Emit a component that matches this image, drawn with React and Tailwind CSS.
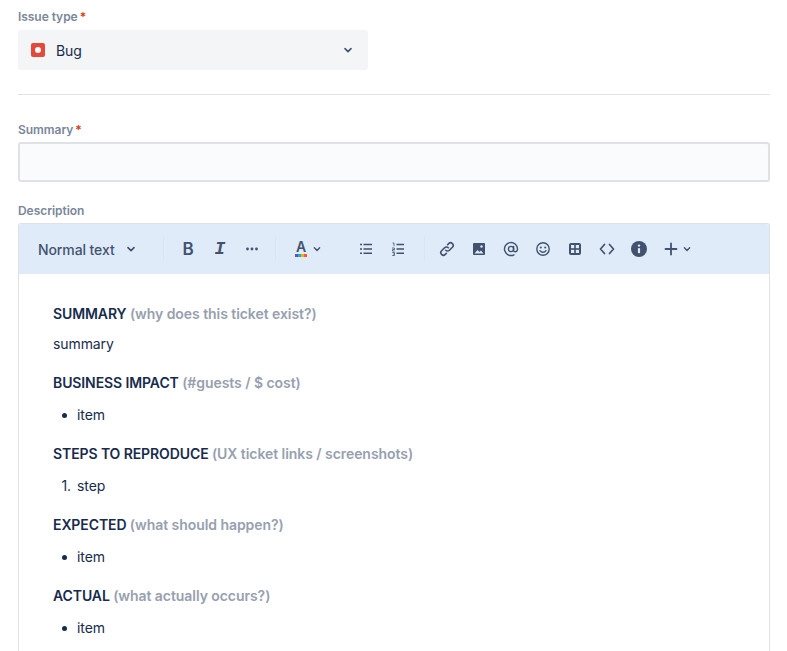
const ink = "#172b4d";
const barBg = "#dfebf9";

function Chevron({ className = "" }) {
  return (
    <svg viewBox="0 0 24 24" className={className} fill="none">
      <path d="M7.5 10l4.5 4.5 4.5-4.5" stroke="currentColor" strokeWidth="2.4" strokeLinecap="round" strokeLinejoin="round" />
    </svg>
  );
}

function Label({ children, required }) {
  return (
    <div className="flex h-[20px] items-center text-[12px] font-semibold leading-[16px] tracking-[-0.05px] text-[#7a869a]">
      {children}
      {required && <span className="ml-[2px] text-[#de350b]">*</span>}
    </div>
  );
}

function Sep() {
  return <div className="h-[24px] w-px bg-[#d8e5f5]" />;
}

function Tool({ children }) {
  return <div className="flex h-[32px] w-[32px] shrink-0 items-center justify-center text-[#42526e]">{children}</div>;
}

function Icon({ children }) {
  return (
    <svg viewBox="0 0 16 16" className="h-[16px] w-[16px]" fill="none">
      {children}
    </svg>
  );
}

function Toolbar() {
  return (
    <div className="flex h-[50px] items-center rounded-t-[3px] bg-[#dfebf9] pl-[19px] text-[#42526e]">
      <div className="flex w-[105px] items-center text-[14px] font-medium tracking-[-0.1px]">
        Normal text
        <Chevron className="ml-[8px] h-[16px] w-[16px]" />
      </div>
      <div className="ml-[20px]"><Sep /></div>
      <div className="ml-[8px] flex">
        <Tool><span className="text-[17px] font-semibold leading-none">B</span></Tool>
        <Tool><span className="font-['Liberation_Mono',monospace] text-[18px] font-bold italic leading-none">I</span></Tool>
        <Tool>
          <Icon>
            <circle cx="3.5" cy="8" r="1.4" fill="currentColor" />
            <circle cx="8" cy="8" r="1.4" fill="currentColor" />
            <circle cx="12.5" cy="8" r="1.4" fill="currentColor" />
          </Icon>
        </Tool>
      </div>
      <div className="ml-[7px]"><Sep /></div>
      <div className="ml-[18px] flex items-center">
        <div className="relative flex h-[18px] w-[14px] flex-col items-center">
          <span className="text-[14px] font-semibold leading-[14px]">A</span>
          <svg viewBox="0 0 12 3" className="h-[3px] w-[12px]">
            <rect x="0" width="3" height="3" fill="#6554c0" />
            <rect x="3" width="3" height="3" fill="#00b8d9" />
            <rect x="6" width="3" height="3" fill="#ffab00" />
            <rect x="9" width="3" height="3" fill="#ff5630" />
          </svg>
        </div>
        <Chevron className="ml-[2px] h-[14px] w-[14px]" />
      </div>
      <div className="ml-[27px] flex">
        <Tool>
          <Icon>
            <path d="M4.5 3.5H13M4.5 7.9H13M4.5 12.3H13" stroke="currentColor" strokeWidth="1.5" />
            <path d="M1 3.5h2M1 7.9h2M1 12.3h2" stroke="currentColor" strokeWidth="1.5" />
          </Icon>
        </Tool>
        <Tool>
          <Icon>
            <path d="M5.5 3.5H13M5.5 7.9H13M5.5 12.3H13" stroke="currentColor" strokeWidth="1.5" />
            <path d="M1.5 2h1.5v3M1 7h2.5v1.5H1.5V10h2.2M1.2 11.5h2.3v3H1.2M2 13h1.5" stroke="currentColor" strokeWidth="0.8" />
          </Icon>
        </Tool>
      </div>
      <div className="ml-[9px]"><Sep /></div>
      <div className="ml-[6px] flex">
        <Tool>
          <Icon>
            <path d="M6.7 9.3a2.6 2.6 0 0 0 3.7 0l3-3a2.6 2.6 0 0 0-3.7-3.7L8.6 3.7" stroke="currentColor" strokeWidth="1.6" strokeLinecap="round" />
            <path d="M9.3 6.7a2.6 2.6 0 0 0-3.7 0l-3 3a2.6 2.6 0 0 0 3.7 3.7l1.1-1.1" stroke="currentColor" strokeWidth="1.6" strokeLinecap="round" />
          </Icon>
        </Tool>
        <Tool>
          <Icon>
            <rect x="2" y="2" width="12" height="12" rx="1" fill="currentColor" />
            <path d="M3.5 12.5l3-3.5 2 2 1.5-1.5 2.5 3z" fill={barBg} />
            <circle cx="10.5" cy="5.5" r="1.2" fill={barBg} />
          </Icon>
        </Tool>
        <Tool>
          <Icon>
            <circle cx="8" cy="8" r="2.6" stroke="currentColor" strokeWidth="1.4" />
            <path d="M10.6 5.4v3.8c0 2.4 3.9 2.2 3.9-1.2A6.5 6.5 0 1 0 11 13.8" stroke="currentColor" strokeWidth="1.4" strokeLinecap="round" />
          </Icon>
        </Tool>
        <Tool>
          <Icon>
            <circle cx="8" cy="8" r="6.2" stroke="currentColor" strokeWidth="1.4" />
            <circle cx="5.8" cy="6.5" r="1" fill="currentColor" />
            <circle cx="10.2" cy="6.5" r="1" fill="currentColor" />
            <path d="M5 9.6c1.5 2.2 4.5 2.2 6 0" stroke="currentColor" strokeWidth="1.3" strokeLinecap="round" />
          </Icon>
        </Tool>
        <Tool>
          <Icon>
            <rect x="2" y="2" width="12" height="12" rx="2" fill="currentColor" />
            <rect x="4" y="4" width="3.2" height="3.2" fill={barBg} />
            <rect x="8.8" y="4" width="3.2" height="3.2" fill={barBg} />
            <rect x="4" y="8.8" width="3.2" height="3.2" fill={barBg} />
            <rect x="8.8" y="8.8" width="3.2" height="3.2" fill={barBg} />
          </Icon>
        </Tool>
        <Tool>
          <Icon>
            <path d="M5.5 3.5L1.5 8l4 4.5M10.5 3.5l4 4.5-4 4.5" stroke="currentColor" strokeWidth="1.7" strokeLinecap="round" strokeLinejoin="round" />
          </Icon>
        </Tool>
        <Tool>
          <Icon>
            <circle cx="8" cy="8" r="8" fill="currentColor" />
            <circle cx="8" cy="4.6" r="1.2" fill={barBg} />
            <rect x="6.9" y="7" width="2.2" height="5.2" rx="1" fill={barBg} />
          </Icon>
        </Tool>
        <Tool>
          <Icon>
            <path d="M8 2.5v11M2.5 8h11" stroke="currentColor" strokeWidth="1.8" strokeLinecap="round" />
          </Icon>
        </Tool>
      </div>
      <Chevron className="-ml-[7px] h-[14px] w-[14px]" />
    </div>
  );
}

function Heading({ title, hint, className = "" }) {
  return (
    <p className={`h-[20px] text-[14px] font-semibold leading-[20px] tracking-[-0.1px] ${className}`} style={{ color: ink }}>
      {title} <span className="tracking-[-0.06px] text-[#97a0af]">{hint}</span>
    </p>
  );
}

function ListRow({ marker, children }) {
  return (
    <div className="mt-[12px] flex h-[20px] items-center text-[14px] leading-[20px] tracking-[-0.1px]" style={{ color: ink }}>
      <span className="w-[24px] pr-[6px] text-right">{marker}</span>
      <span>{children}</span>
    </div>
  );
}

const Dot = () => <span className="mb-[1px] mr-[4px] inline-block h-[5px] w-[5px] rounded-full bg-[#172b4d] align-middle" />;

export default function App() {
  return (
    <div className="h-[651px] overflow-hidden bg-white pl-[18px] pr-[17px] pt-[7px] font-['Inter',sans-serif]">
      <Label required>Issue type</Label>
      <div className="mt-[3px] flex h-[40px] w-[350px] items-center rounded-[3px] bg-[#f4f5f7] pl-[13px] pr-[12px]">
        <div className="flex h-[14px] w-[14px] items-center justify-center rounded-[2px] bg-[#e5493a]">
          <span className="h-[6px] w-[6px] rounded-full bg-white" />
        </div>
        <span className="ml-[11px] text-[14px] tracking-[-0.1px] text-[#172b4d]">Bug</span>
        <Chevron className="ml-auto h-[16px] w-[16px] text-[#42526e]" />
      </div>
      <div className="mt-[24px] h-px bg-[#dfe1e6]" />
      <div className="mt-[25px]"><Label required>Summary</Label></div>
      <div className="mt-[2px] h-[40px] rounded-[3px] border-2 border-[#dfe1e6] bg-[#fafbfc]" />
      <div className="mt-[19px]"><Label>Description</Label></div>
      <div className="mt-[2px] rounded-t-[3px] border border-b-0 border-[#dfe1e6]">
        <Toolbar />
        <div className="bg-white pb-[40px] pl-[34px] pt-[30px]">
          <Heading title="SUMMARY" hint="(why does this ticket exist?)" />
          <p className="mt-[10px] h-[20px] text-[14px] leading-[20px] tracking-[-0.1px]" style={{ color: ink }}>summary</p>
          <Heading className="mt-[19px]" title="BUSINESS IMPACT" hint="(#guests / $ cost)" />
          <ListRow marker={<Dot />}>item</ListRow>
          <Heading className="mt-[19px]" title="STEPS TO REPRODUCE" hint="(UX ticket links / screenshots)" />
          <ListRow marker="1.">step</ListRow>
          <Heading className="mt-[19px]" title="EXPECTED" hint="(what should happen?)" />
          <ListRow marker={<Dot />}>item</ListRow>
          <Heading className="mt-[19px]" title="ACTUAL" hint="(what actually occurs?)" />
          <ListRow marker={<Dot />}>item</ListRow>
        </div>
      </div>
    </div>
  );
}
